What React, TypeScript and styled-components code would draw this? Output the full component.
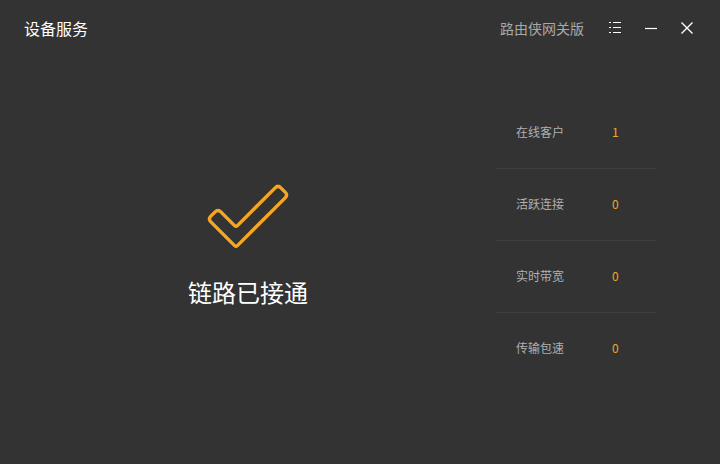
import styled, { createGlobalStyle } from "styled-components"

const Global = createGlobalStyle`
    html, body {
        margin: 0;
        padding: 0;
        background: #333333;
        height: 100%;
    }
    body {
        font-family: 'Noto Sans CJK SC', 'Noto Sans', sans-serif;
        color: #ffffff;
    }
`

const Win = styled.div`
    width: 720px;
    height: 464px;
    background: #333333;
    display: flex;
    flex-direction: column;
    overflow: hidden;
`

const Header = styled.div`
    height: 56px;
    display: flex;
    align-items: center;
    padding: 0 26px 0 24px;
    box-sizing: border-box;
`

const Title = styled.div`
    font-size: 16px;
    color: #ffffff;
    flex: 1;
`

const Edition = styled.div`
    font-size: 14px;
    color: #a8a8a8;
    margin-right: 24px;
`

const Controls = styled.div`
    display: flex;
    align-items: center;
    gap: 22px;
`

const IconBtn = styled.div`
    width: 14px;
    height: 14px;
    display: flex;
    align-items: center;
    justify-content: center;
`

const Body = styled.div`
    flex: 1;
    display: flex;
`

const Main = styled.div`
    width: 496px;
    display: flex;
    flex-direction: column;
    align-items: center;
    padding-top: 120px;
    box-sizing: border-box;
`

const Status = styled.div`
    margin-top: 24px;
    font-size: 24px;
    line-height: 32px;
    color: #ffffff;
`

const Stats = styled.div`
    width: 160px;
    margin-top: 41px;
    display: flex;
    flex-direction: column;
`

const Row = styled.div<{ $last?: boolean }>`
    height: 72px;
    box-sizing: border-box;
    display: flex;
    align-items: center;
    padding-left: 20px;
    padding-bottom: 2px;
    border-bottom: 1px solid ${p => p.$last ? "transparent" : "#3e3e3e"};
`

const Label = styled.div`
    width: 96px;
    font-size: 12px;
    color: #b0b0b0;
`

const Value = styled.div`
    font-size: 12px;
    color: #f5a623;
`

const stats = [
    { label: "在线客户", value: "1" },
    { label: "活跃连接", value: "0" },
    { label: "实时带宽", value: "0" },
    { label: "传输包速", value: "0" },
]

const Check = () => (
    <svg width="96" height="76" viewBox="0 0 96 76">
        <path
            d="M10.83 40.17 L15.17 35.83 Q18 33 20.83 35.83 L34.59 49.59 Q36 51 37.41 49.59 L75.17 11.83 Q78 9 80.83 11.83 L85.17 16.17 Q88 19 85.17 21.83 L37.41 69.59 Q36 71 34.59 69.59 L10.83 45.83 Q8 43 10.83 40.17 Z"
            fill="none"
            stroke="#f5a623"
            strokeWidth="3.4"
            strokeLinejoin="round"
        />
    </svg>
)

const App = () => {
    return (
        <Win>
            <Global />
            <Header>
                <Title>设备服务</Title>
                <Edition>路由侠网关版</Edition>
                <Controls>
                    <IconBtn>
                        <svg width="14" height="14" viewBox="0 0 14 14">
                            <g stroke="#ffffff" strokeWidth="1">
                                <line x1="1" y1="1.5" x2="3" y2="1.5" />
                                <line x1="5" y1="1.5" x2="13" y2="1.5" />
                                <line x1="1" y1="6.5" x2="3" y2="6.5" />
                                <line x1="5" y1="6.5" x2="13" y2="6.5" />
                                <line x1="1" y1="11.5" x2="3" y2="11.5" />
                                <line x1="5" y1="11.5" x2="13" y2="11.5" />
                            </g>
                        </svg>
                    </IconBtn>
                    <IconBtn>
                        <svg width="14" height="14" viewBox="0 0 14 14">
                            <line x1="1" y1="7.5" x2="13" y2="7.5" stroke="#ffffff" strokeWidth="1.2" />
                        </svg>
                    </IconBtn>
                    <IconBtn>
                        <svg width="14" height="14" viewBox="0 0 14 14">
                            <path d="M1.5 1.5 L12.5 12.5 M12.5 1.5 L1.5 12.5" stroke="#ffffff" strokeWidth="1.4" />
                        </svg>
                    </IconBtn>
                </Controls>
            </Header>
            <Body>
                <Main>
                    <Check />
                    <Status>链路已接通</Status>
                </Main>
                <Stats>
                    {stats.map((s, i) => (
                        <Row key={s.label} $last={i === stats.length - 1}>
                            <Label>{s.label}</Label>
                            <Value>{s.value}</Value>
                        </Row>
                    ))}
                </Stats>
            </Body>
        </Win>
    )
}

export default App
